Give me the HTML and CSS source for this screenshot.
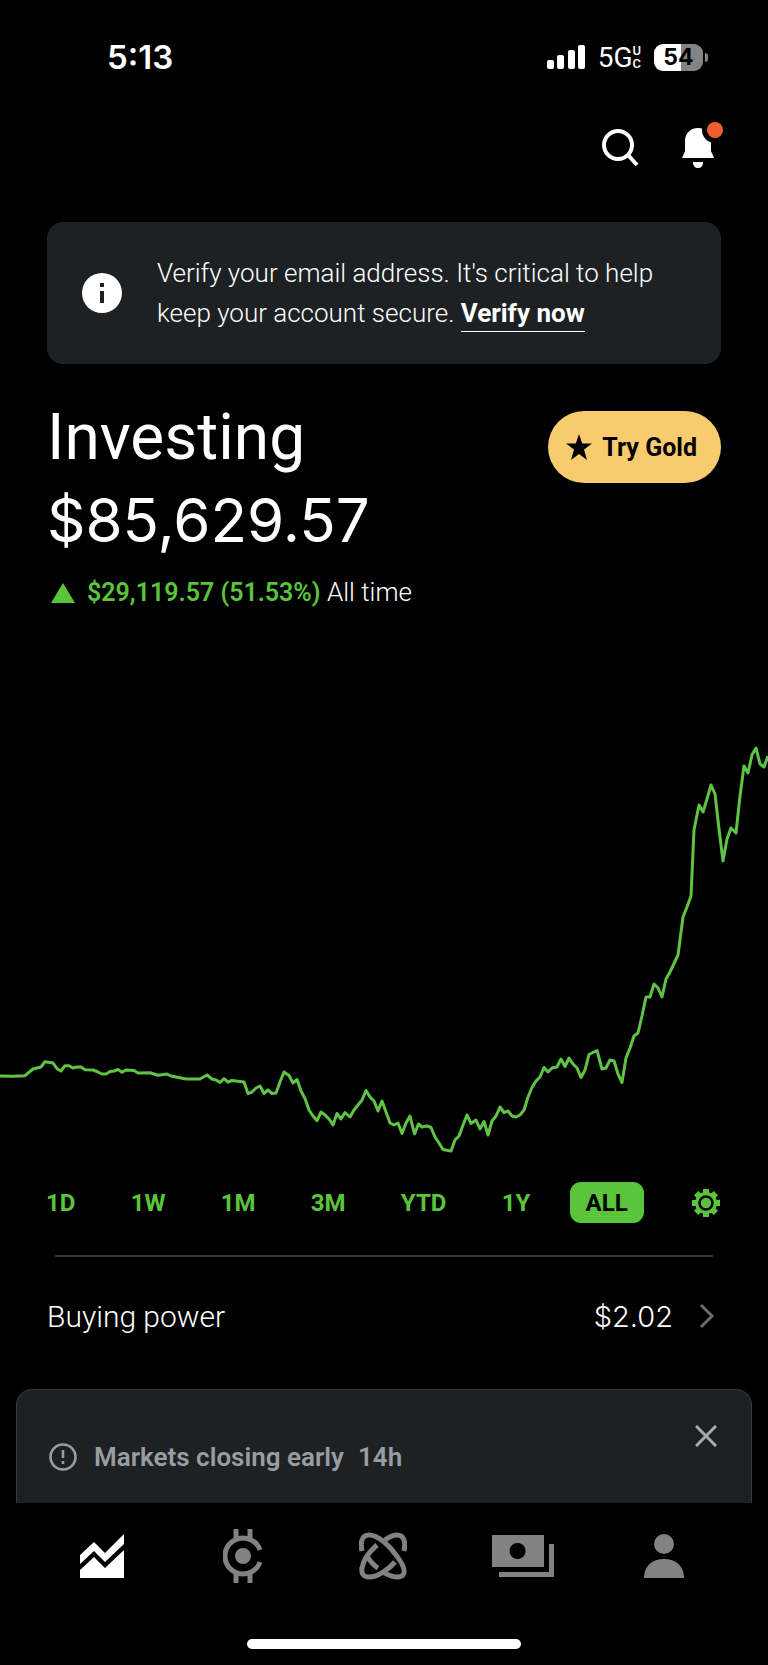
FILE: index.html
```html
<!DOCTYPE html>
<html lang="en">
<head>
    <meta charset="UTF-8">
    <meta name="viewport" content="width=device-width, initial-scale=1.0">
    <title>Investing</title>
    <link rel="stylesheet" href="styles.css">
</head>
<body>
    <div class="app">
        <!-- Status bar -->
        <div class="status-bar">
            <span class="time">5:13</span>
            <div class="status-icons">
                <svg width="38" height="26" viewBox="0 0 38 26" fill="#fff">
                    <rect x="0" y="16" width="7" height="9" rx="2"/>
                    <rect x="10" y="11" width="7" height="14" rx="2"/>
                    <rect x="21" y="6" width="7" height="19" rx="2"/>
                    <rect x="31" y="1" width="7" height="24" rx="2"/>
                </svg>
                <div class="network">5G<span class="network-uc"><span>U</span><span>C</span></span></div>
                <div class="battery"><span class="battery-level">54</span></div>
            </div>
        </div>

        <!-- Search and notifications -->
        <header class="top-actions">
            <button class="icon-button" aria-label="Search">
                <svg width="38" height="40" viewBox="0 0 38 40" fill="none" stroke="#fff" stroke-width="4">
                    <circle cx="17" cy="17" r="14"/>
                    <path d="M27 27l9 10"/>
                </svg>
            </button>
            <button class="icon-button" aria-label="Notifications">
                <svg width="42" height="46" viewBox="0 0 42 46">
                    <path d="M16 6C8 6 3 12 3 19v10L0 36h32l-3-7V19C29 12 24 6 16 6z" fill="#fff"/>
                    <path d="M11 40h10c0 4-2 6-5 6s-5-2-5-6z" fill="#fff"/>
                    <circle cx="33" cy="8" r="13" fill="#000"/>
                    <circle cx="33" cy="8" r="8" fill="#ee5e2f"/>
                </svg>
            </button>
        </header>

        <main>
            <!-- Email banner -->
            <section class="banner">
                <svg class="banner-icon" width="40" height="40" viewBox="0 0 40 40">
                    <circle cx="20" cy="20" r="20" fill="#fff"/>
                    <path d="M18 10h4v4h-4zM18 18h4v12h-4z" fill="#1e2124"/>
                </svg>
                <p>Verify your email address. It's critical to help keep your account secure. <a href="#">Verify now</a></p>
            </section>

            <!-- Portfolio value -->
            <section class="portfolio">
                <div>
                    <h1>Investing</h1>
                    <div class="balance">$85,629.57</div>
                </div>
                <button class="gold-button">
                    <svg width="26" height="26" viewBox="0 0 26 26">
                        <path d="M13 0l3.200 9.500H26l-8 6L21 26l-8-6-8 6 3-10.500-8-6h9.800z"/>
                    </svg>
                    Try Gold
                </button>
            </section>
            <p class="gain">
                <svg width="24" height="20" viewBox="0 0 24 20"><path d="M12 0l12 20H0z" fill="#5ac53b"/></svg>
                <span><strong>$29,119.57 (51.53%)</strong> All time</span>
            </p>

            <!-- Chart -->
            <svg class="chart" viewBox="0 0 768 440" role="img" aria-label="Portfolio value, all time">
                <polyline fill="none" stroke="#5fc445" stroke-width="3" stroke-linejoin="round" points="0,346 13,346.3 25,345.7 33,339 41,337 45,331.7 53,333 57,338.7 61,341 65,335.7 69,335.7 73,338 77,337 81,337 85,339.7 93,340 98,342 102,344 106,344 110,341.5 114,341 118,339.5 122,342.3 126,340 134,340.5 138,343 150,342.7 158,345.3 167,344 171,346 186,349 200,349 207,345 212,349 216,350 220,352.5 224,348.7 228,352 232,350.5 244,352 248,363.5 252,362 256,358 260,356 264,363.5 268,360 272,363.5 276,363 280,352 284,342 289,345.5 293,353 297,349.5 301,361 305,368.5 309,380 313,386 317,390.7 321,382 325,385 329,389 333,395 337,383.5 341,389 345,382.5 350,387 354,380 358,375 362,370 366,360.5 370,367 374,371 378,381 382,371 386,382 390,393 394,395 398,393 402,403.5 406,393 410,386 414.5,404 418.5,394 422,397 427,396 431,397.5 435,407 439,413 443,419.5 451,421 455,410 459,406 463,395 467,385 471,393.5 476,390 480,399 484,391.5 488,405 492,391 496,386 500,377 504,382.5 508,381 512,386 516,387 520,385 524,380 528,367 532,357.5 536,351 540,347 544,337.5 548,342 552,338 557,337 561,329 565,336.5 569,328 573,334 577,338 581,347.5 585,340 589,324.5 597,320.5 602,339 606,338 610,330 614,331 618,344 622,352.5 626,328 630,318 634,306 638,303 642,286 646,267 650,267 654,254 658,258 662,267 666,249 670,242 678,225 683,187 687,177 691,166 694,100 699,75 703,82 707,69 711,55 715,64 719,99 723,131 727,109 731,98 736,103 740,66 744,36 748,43 752,25 756,18 760,34 764,37 768,26"/>
            </svg>

            <div class="ranges">
                <button>1D</button>
                <button>1W</button>
                <button>1M</button>
                <button>3M</button>
                <button>YTD</button>
                <button>1Y</button>
                <button class="selected">ALL</button>
                <button class="settings" aria-label="Chart settings">
                    <svg width="28" height="28" viewBox="0 0 28 28">
                        <g fill="#5ac53b">
                            <circle cx="14" cy="14" r="11"/>
                            <path id="tooth" d="M11 0h6v28h-6z"/>
                            <use href="#tooth" transform="rotate(45 14 14)"/>
                            <use href="#tooth" transform="rotate(90 14 14)"/>
                            <use href="#tooth" transform="rotate(135 14 14)"/>
                        </g>
                        <circle cx="14" cy="14" r="6.5" fill="none" stroke="#000" stroke-width="2.6"/>
                    </svg>
                </button>
            </div>

            <hr>
            <a class="buying-power" href="#">
                <span>Buying power</span>
                <span class="amount">$2.02</span>
                <svg width="16" height="26" viewBox="0 0 16 26" fill="none" stroke="#6a6a6a" stroke-width="3"><path d="M2 2l11 11L2 24"/></svg>
            </a>

            <!-- Market notice -->
            <section class="notice">
                <svg width="28" height="28" viewBox="0 0 28 28" fill="none" stroke="#979ea3" stroke-width="2.6">
                    <circle cx="14" cy="14" r="12.5"/>
                    <path d="M14 7v8M14 18v3"/>
                </svg>
                <span class="notice-title">Markets closing early</span>
                <span>14h</span>
                <button class="close" aria-label="Dismiss">
                    <svg width="22" height="22" viewBox="0 0 22 22" fill="none" stroke="#a3abaf" stroke-width="3"><path d="M1 1l20 20M21 1L1 21"/></svg>
                </button>
            </section>
        </main>

        <!-- Bottom tabs -->
        <nav class="tabs">
            <a href="#" aria-label="Investing">
                <svg width="44" height="44" viewBox="0 0 44 44" fill="#fff">
                    <path d="M0 21L14 8l11 11L44 0v10L25 28 14 17 0 30z"/>
                    <path d="M0 36l14-13 11 11L44 16v28H0z"/>
                </svg>
            </a>
            <a href="#" aria-label="Crypto">
                <svg width="40" height="54" viewBox="0 0 40 54" fill="none" stroke="#828282" stroke-width="5">
                    <path d="M37 21A18 18 0 1 0 37 33"/>
                    <path d="M13 0v10M27 0v10M13 44v10M27 44v10"/>
                    <circle cx="20" cy="27" r="8" fill="#828282" stroke="none"/>
                </svg>
            </a>
            <a href="#" aria-label="Discover">
                <svg width="48" height="48" viewBox="0 0 48 48" fill="none" stroke="#828282" stroke-width="5">
                    <path d="M3 19C1 10 3 3 10 3c9 0 20 10 27 20 7 9 10 16 7 20-3 3-11 3-20-3"/>
                    <path d="M45 19c2-9 0-16-7-16-4 0-8 2-12 5"/>
                    <path d="M18 13C10 20 4 29 3 36c-1 6 2 9 7 9 9 0 20-8 26-15"/>
                    <path d="M8 24c3 5 6 9 11 12"/>
                </svg>
            </a>
            <a href="#" aria-label="Cash">
                <svg width="62" height="42" viewBox="0 0 62 42" fill="#828282">
                    <path fill-rule="evenodd" d="M0 0h52v32H0zM25.500 8a8 8 0 1 0 .1 0z"/>
                    <path d="M57 9h5v33H7v-5h50z"/>
                </svg>
            </a>
            <a href="#" aria-label="Account">
                <svg width="40" height="44" viewBox="0 0 40 44" fill="#828282">
                    <circle cx="20" cy="10" r="10"/>
                    <path d="M0 44C0 32 8 25 20 25s20 7 20 19z"/>
                </svg>
            </a>
        </nav>
        <div class="home-bar"></div>
    </div>
</body>
</html>
```
FILE: styles.css
```css
* {
    box-sizing: border-box;
}
body {
    font-family: Roboto, Arial, sans-serif;
    background-color: #000;
    color: #fff;
    margin: 0;
}
h1, p {
    margin: 0;
}
button {
    font-family: inherit;
    border: none;
    padding: 0;
    background: none;
    cursor: pointer;
}
a {
    color: inherit;
    text-decoration: none;
}
svg {
    display: block;
    flex-shrink: 0;
}
.app {
    display: flex;
    flex-direction: column;
    min-height: 100vh;
}

/* Status bar */
.status-bar {
    display: flex;
    justify-content: space-between;
    align-items: center;
    height: 72px;
    margin-top: 21px;
    padding: 0 65px 0 107px;
}
.time {
    font-family: Inter, sans-serif;
    font-size: 33px;
    font-weight: 600;
}
.status-icons {
    display: flex;
    align-items: center;
    gap: 13px;
}
.network {
    display: flex;
    align-items: center;
    font-size: 28px;
}
.network-uc {
    display: flex;
    flex-direction: column;
    font-size: 13px;
    line-height: 13px;
    font-weight: 500;
}
.battery {
    position: relative;
    width: 49px;
    height: 27px;
    border-radius: 9px;
    background: linear-gradient(90deg, #fff 55%, #848484 55%);
    color: #000;
    text-align: center;
}
.battery::after {
    content: "";
    position: absolute;
    right: -5px;
    top: 9px;
    width: 3px;
    height: 9px;
    border-radius: 0 4px 4px 0;
    background-color: #848484;
}
.battery-level {
    font-family: Inter, sans-serif;
    font-size: 23px;
    font-weight: 700;
    line-height: 27px;
}

/* Top actions */
.top-actions {
    display: flex;
    justify-content: flex-end;
    align-items: flex-end;
    gap: 43px;
    height: 75px;
    padding-right: 44px;
}

/* Banner */
.banner {
    display: flex;
    align-items: center;
    gap: 35px;
    margin: 54px 47px 0;
    padding: 31px 35px;
    border-radius: 16px;
    background-color: #1e2124;
    font-size: 26px;
    font-weight: 300;
    line-height: 40px;
}
.banner a {
    font-weight: 700;
    padding-bottom: 3px;
    border-bottom: 1px solid #fff;
}

/* Portfolio */
.portfolio {
    display: flex;
    justify-content: space-between;
    align-items: flex-start;
    padding: 0 47px;
    margin-top: 32px;
}
h1, .balance {
    font-size: 64px;
    font-weight: 400;
    line-height: 83px;
}
.balance {
    font-family: Inter, sans-serif;
    font-size: 60px;
}
.gold-button {
    display: flex;
    align-items: center;
    gap: 10px;
    height: 72px;
    margin-top: 15px;
    padding: 0 24px 0 18px;
    border-radius: 36px;
    background-color: #f7cb6e;
    color: #000;
    font-size: 25px;
    font-weight: 700;
}
.gain {
    display: flex;
    align-items: center;
    gap: 12px;
    padding: 0 51px;
    margin-top: 10px;
    font-size: 26px;
    font-weight: 300;
    line-height: 40px;
}
.gain strong {
    color: #5ac53b;
    font-size: 25px;
    font-weight: 600;
}

/* Chart */
.chart {
    width: 100%;
    height: auto;
    margin-top: 117px;
}
.ranges {
    display: flex;
    justify-content: space-between;
    margin: 12px 32px 0 30px;
}
.ranges button {
    height: 41px;
    padding: 0 16px;
    border-radius: 11px;
    color: #5ac53b;
    font-size: 24px;
    font-weight: 700;
}
.ranges .selected {
    background-color: #5ac53b;
    color: #000;
}
.ranges .settings {
    margin-left: 9px;
}
hr {
    height: 2px;
    margin: 32px 55px 0;
    border: none;
    background-color: #333;
}
.buying-power {
    display: flex;
    align-items: center;
    height: 118px;
    margin-bottom: 14px;
    padding: 0 53px 0 47px;
    font-size: 30px;
    font-weight: 300;
}
.amount {
    margin-left: auto;
    margin-right: 26px;
    font-family: Inter, sans-serif;
    font-size: 29px;
}

/* Market notice */
.notice {
    display: flex;
    align-items: center;
    height: 114px;
    margin: 0 16px;
    padding: 20px 34px 0 32px;
    border: 1px solid #3a3b3b;
    border-bottom: none;
    border-radius: 16px 16px 0 0;
    background-color: #1e2124;
    color: #979ea3;
    font-size: 26px;
    font-weight: 600;
}
.notice-title {
    margin: 0 14px 0 17px;
}
.close {
    margin-left: auto;
    margin-bottom: 42px;
}

/* Tabs */
.tabs {
    display: grid;
    grid-template-columns: repeat(5, 1fr);
    place-items: center;
    height: 106px;
    padding: 0 34px 0 32px;
}
.home-bar {
    width: 274px;
    height: 10px;
    margin: auto auto 16px;
    border-radius: 5px;
    background-color: #fff;
}
```
